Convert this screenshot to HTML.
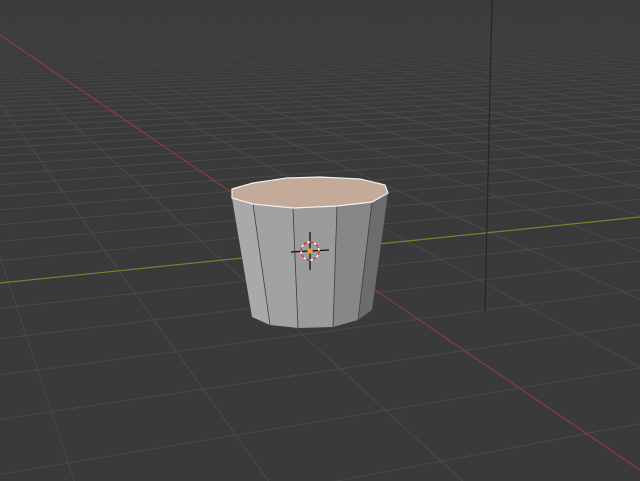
<!DOCTYPE html>
<html><head><meta charset="utf-8"><style>
html,body{margin:0;padding:0;background:#3a3a3a;overflow:hidden;width:640px;height:481px}
svg{display:block;overflow:hidden;position:absolute;left:0;top:0}
</style></head><body>
<svg id="s" width="640" height="481" viewBox="0 0 640 481" xmlns="http://www.w3.org/2000/svg">
<rect width="640" height="481" fill="#3a3a3a"/>
<g id="grid"></g>
<line x1="0" y1="283" x2="640" y2="217" stroke="#6d8a2e" stroke-width="1.2"/>
<line x1="0" y1="35" x2="640" y2="470" stroke="#8a3a45" stroke-width="1.2"/>
<line x1="492" y1="0" x2="485" y2="312" stroke="#262626" stroke-width="1.2"/>
<polygon points="232,198 253,204 270,325 252,317" fill="#a9a9a9"/>
<polygon points="253,204 293,208 298,328 270,325" fill="#a2a2a2"/>
<polygon points="293,208 337,206 333,327 298,328" fill="#9b9b9b"/>
<polygon points="337,206 372,202 358,320 333,327" fill="#878787"/>
<polygon points="372,202 388,193 372,310 358,320" fill="#6c6c6c"/>
<g stroke="#3e3e3e" stroke-width="0.8">
<line x1="253" y1="204" x2="270" y2="325"/>
<line x1="293" y1="208" x2="298" y2="328"/>
<line x1="337" y1="206" x2="333" y2="327"/>
<line x1="372" y1="202" x2="358" y2="320"/>
</g>
<polygon points="232,189 253,183 287,178 320,177 360,179 385,185 388,193 372,202 337,206 293,208 253,204 232,198" fill="#c4aa98" stroke="#f0f0f0" stroke-width="1.2"/>
<line x1="310" y1="232" x2="310" y2="270" stroke="#111" stroke-width="1.3"/>
<line x1="291" y1="252" x2="329" y2="250" stroke="#111" stroke-width="1.3"/>
<circle cx="310" cy="251" r="9" fill="none" stroke="#fff" stroke-width="1.3"/>
<circle cx="310" cy="251" r="9" fill="none" stroke="#d02020" stroke-width="1.3" stroke-dasharray="4 3"/>
<circle cx="310" cy="251" r="2.6" fill="#f0a020"/>
</svg>
<script>
(function(){
var O=[317,250],VR=[-95,-30],VG=[3035,-30],c=0.066,d=0.034;
function p(u,v){var w=1+u*c+v*d;return[(O[0]+u*c*VR[0]+v*d*VG[0])/w,(O[1]+u*c*VR[1]+v*d*VG[1])/w];}
var g=document.getElementById('grid'),out='';
function line(A,B){var dx=B[0]-A[0],dy=B[1]-A[1];var x2=A[0]+dx*60,y2=A[1]+dy*60;
 out+='<line x1="'+A[0].toFixed(1)+'" y1="'+A[1].toFixed(1)+'" x2="'+x2.toFixed(1)+'" y2="'+y2.toFixed(1)+'"/>';}
for(var k=-40;k<=150;k++){ if(k==0)continue; if(1+k*c<=0)continue; line(VG,p(k,0));}
for(var k=-80;k<=300;k++){ if(k==0)continue; if(1+k*d<=0)continue; line(VR,p(0,k));}
g.innerHTML='<defs><linearGradient id="fd" x1="0" y1="0" x2="0" y2="1"><stop offset="0" stop-color="#3a3a3a" stop-opacity="1"/><stop offset="0.25" stop-color="#3a3a3a" stop-opacity="0"/></linearGradient></defs><g stroke="#4a4a4a" stroke-width="1">'+out+'</g><rect x="0" y="0" width="640" height="481" fill="url(#fd)"/>';
})();
</script>
</body></html>
